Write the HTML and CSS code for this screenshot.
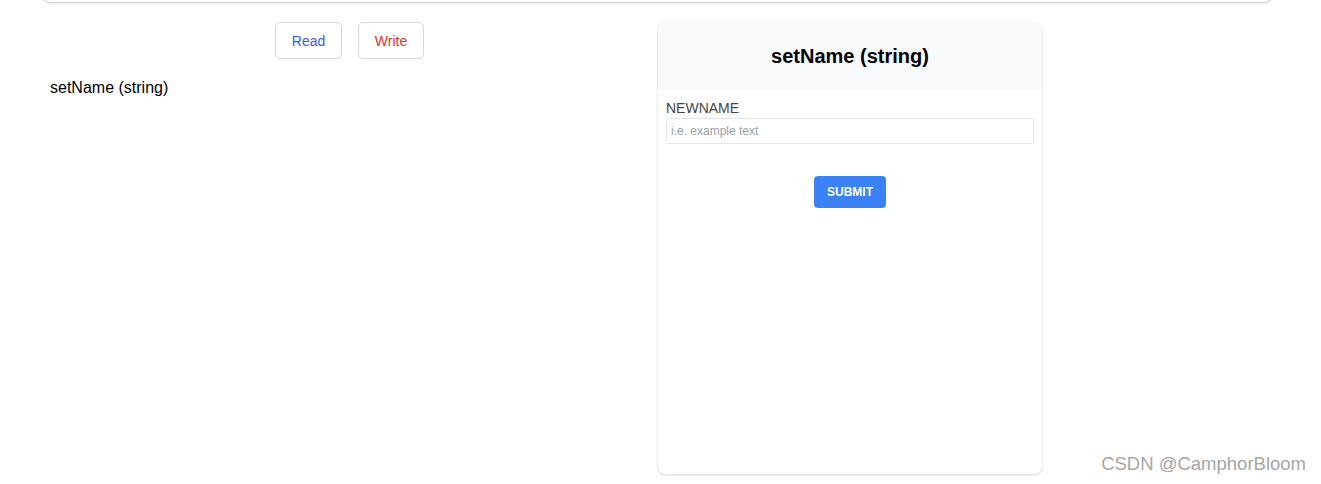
FILE: index.html
```html
<!DOCTYPE html>
<html>
<head>
<meta charset="utf-8">
<link rel="stylesheet" href="styles.css">
</head>
<body>
<div class="topbar"></div>
<div class="main">
  <div class="left">
    <div class="tabs">
      <button class="tab tab-read">Read</button>
      <button class="tab tab-write">Write</button>
    </div>
    <div class="method">setName (string)</div>
  </div>
  <div class="card">
    <div class="card-head">setName (string)</div>
    <div class="card-body">
      <label class="field-label">NEWNAME</label>
      <input class="field-input" type="text" placeholder="i.e. example text">
      <div class="actions">
        <button class="submit">SUBMIT</button>
      </div>
    </div>
  </div>
</div>
<div class="watermark">CSDN @CamphorBloom</div>
</body>
</html>
```
FILE: styles.css
```css
html, body {
  margin: 0;
  padding: 0;
  background: #ffffff;
  font-family: "Liberation Sans", Arial, sans-serif;
  height: 484px;
  overflow: hidden;
}
body {
  position: relative;
}
.topbar {
  margin: -20px 49px 0 43px;
  height: 22px;
  border-radius: 8px;
  background: #fff;
  box-shadow: 0 1px 3px rgba(0, 0, 0, 0.18), 0 1px 1px rgba(0, 0, 0, 0.06);
}
.main {
  display: flex;
  align-items: flex-start;
  margin: 0 49px 0 43px;
  padding-top: 20px;
}
.left {
  width: 613px;
  flex: none;
}
.tabs {
  display: flex;
  justify-content: center;
  gap: 16px;
}
.tab {
  height: 37px;
  padding: 0;
  background: #fff;
  border: 1px solid #d6d6de;
  border-radius: 5px;
  font-family: "Liberation Sans", Arial, sans-serif;
  font-size: 14px;
}
.tab-read { color: #3b5bdb; width: 67px; }
.tab-write { color: #e03131; width: 66px; }
.method {
  margin-top: 20px;
  padding-left: 7px;
  font-size: 16px;
  line-height: 18px;
  color: #000;
}
.card {
  margin-left: 2px;
  width: 384px;
  height: 452px;
  flex: none;
  border-radius: 8px;
  background: #fff;
  box-shadow: 0 1px 3px rgba(0, 0, 0, 0.16), 0 0 1px rgba(0, 0, 0, 0.08);
  overflow: hidden;
}
.card-head {
  height: 68px;
  background: #f8f9fa;
  display: flex;
  align-items: center;
  justify-content: center;
  font-size: 20px;
  font-weight: bold;
  color: #000;
}
.card-body {
  padding: 10px 8px 0;
  display: flex;
  flex-direction: column;
}
.field-label {
  font-size: 14px;
  line-height: 16px;
  color: #444;
}
.field-input {
  margin-top: 2px;
  box-sizing: border-box;
  height: 26px;
  width: 368px;
  border: 1px solid #e3e5e8;
  border-radius: 3px;
  padding: 0 4px;
  font-family: "Liberation Sans", Arial, sans-serif;
  font-size: 12px;
  outline: none;
}
.field-input::placeholder {
  color: #9aa0a8;
}
.actions {
  display: flex;
  justify-content: center;
  margin-top: 32px;
}
.submit {
  width: 72px;
  height: 32px;
  border: none;
  border-radius: 4px;
  background: #3b82f6;
  color: #fff;
  font-family: "Liberation Sans", Arial, sans-serif;
  font-size: 12px;
  font-weight: bold;
}
.watermark {
  position: absolute;
  right: 15px;
  top: 453px;
  font-size: 18.5px;
  line-height: 22px;
  color: #a6a6a6;
}
```
